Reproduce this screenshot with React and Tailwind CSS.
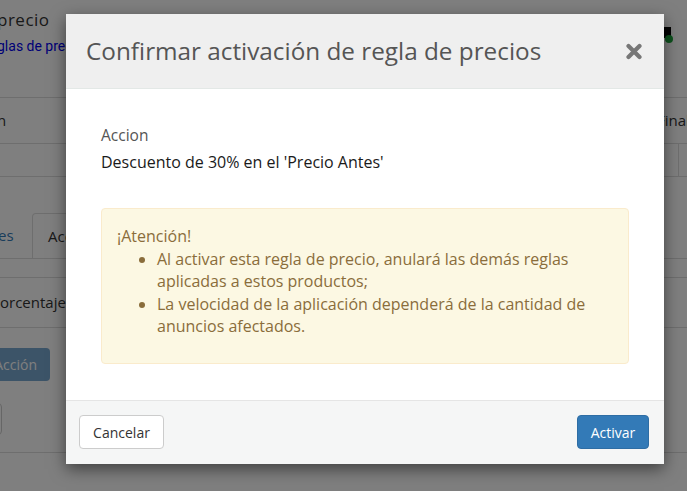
import React from "react";

const BackgroundPage = () => {
  return (
    <div className="w-full font-['Open_Sans',sans-serif] text-[#333]">
      {/* top title bar */}
      <div className="flex justify-between h-[98px] border-b border-[#ddd]">
        <div className="-ml-[3px] pt-[8px]">
          <div className="text-[17px] leading-[24px] tracking-[0.5px]">precio</div>
          <div className="mt-[4px] text-[14px] leading-[20px] text-[#0000ee] font-['Roboto',sans-serif]">
            glas de precios
          </div>
        </div>
        <div className="pt-[27px] pr-[16px]">
          <div className="relative w-[12px] h-[11px] bg-black">
            <span className="absolute -right-[2px] top-[8px] w-[8px] h-[8px] rounded-full bg-[#1aa33a]" />
          </div>
        </div>
      </div>

      {/* table header + row */}
      <div className="flex h-[46px] items-center border-b border-[#ddd] text-[15px]">
        <span className="flex-1 -ml-[3px]">n</span>
        <span className="w-[30px] overflow-hidden whitespace-nowrap">Final</span>
      </div>
      <div className="flex h-[33px] border-b border-[#ddd]">
        <div className="flex-1" />
        <div className="w-[9px] border-l border-[#ddd]" />
      </div>

      {/* tabs */}
      <div className="mt-[37px] flex items-end h-[45px] border-b border-[#ddd] text-[15px]">
        <div className="w-[32px] h-[45px] flex items-center text-[#337ab7]">
          <span className="-ml-[2px]">es</span>
        </div>
        <div className="h-[45px] px-[15px] flex items-center bg-white border border-[#ddd] border-b-0 rounded-t-[4px]">
          Acción
        </div>
      </div>

      {/* row */}
      <div className="mt-[18px] flex items-center h-[51px] border-t border-b border-[#ddd] text-[15px]">
        <span className="-ml-[9px]">Porcentaje</span>
      </div>

      <div className="mt-[20px] flex">
        <div className="-ml-[80px] w-[130px] h-[33px] pr-[13px] flex items-center justify-end whitespace-nowrap rounded-[4px] bg-[#337ab7] opacity-65 text-white text-[14px]">
          Nueva Acción
        </div>
      </div>

      <div className="mt-[22px] flex">
        <div className="-ml-[10px] w-[12px] h-[32px] border border-[#ccc] rounded-[4px]" />
      </div>

      <div className="mt-[17px] border-t border-[#ddd]" />
    </div>
  );
};

const CloseIcon = () => (
  <svg width="16" height="17" viewBox="0 0 16 17">
    <path
      d="M2.5 3 L13.5 14 M13.5 3 L2.5 14"
      stroke="#777"
      strokeWidth="4.2"
      strokeLinecap="round"
    />
  </svg>
);

const App = () => {
  return (
    <div className="relative w-full h-[491px] overflow-hidden bg-white">
      <BackgroundPage />

      {/* backdrop */}
      <div className="absolute inset-0 bg-black/50" />

      {/* modal */}
      <div className="absolute left-[66px] top-[14px] w-[598px] bg-white shadow-[0_5px_15px_rgba(0,0,0,0.5)] font-['Open_Sans',sans-serif]">
        {/* header */}
        <div className="h-[75px] bg-[#efefef] border-b border-[#e3e8e6] flex items-center justify-between pl-[20px] pr-[22px]">
          <h4 className="text-[24.3px] leading-[30px] text-[#555] pb-[1px]">
            Confirmar activación de regla de precios
          </h4>
          <button className="flex items-center">
            <CloseIcon />
          </button>
        </div>

        {/* body */}
        <div className="pt-[36px] pb-[36px] px-[35px]">
          <div className="text-[15.5px] leading-[20px] text-[#555]">Accion</div>
          <div className="mt-[7px] text-[16px] leading-[20px] text-[#1a1a1a]">
            Descuento de 30% en el 'Precio Antes'
          </div>

          <div className="mt-[36px] bg-[#fcf8e3] border border-[#faebcc] rounded-[4px] pt-[16px] pb-[25px] px-[15px] text-[#8a6d3b] text-[16px] leading-[22.5px]">
            <div>¡Atención!</div>
            <ul className="list-disc pl-[40px]">
              <li>
                Al activar esta regla de precio, anulará las demás reglas
                aplicadas a estos productos;
              </li>
              <li>
                La velocidad de la aplicación dependerá de la cantidad de
                anuncios afectados.
              </li>
            </ul>
          </div>
        </div>

        {/* footer */}
        <div className="h-[64px] bg-[#f5f6f6] border-t border-[#e5e5e5] flex items-center justify-between pl-[13px] pr-[15px]">
          <button className="h-[34px] w-[85px] bg-white border border-[#ccc] rounded-[4px] text-[14px] text-[#333]">
            Cancelar
          </button>
          <button className="h-[34px] w-[72px] bg-[#337ab7] border border-[#2e6da4] rounded-[4px] text-[14px] text-white">
            Activar
          </button>
        </div>
      </div>
    </div>
  );
};

export default App;
